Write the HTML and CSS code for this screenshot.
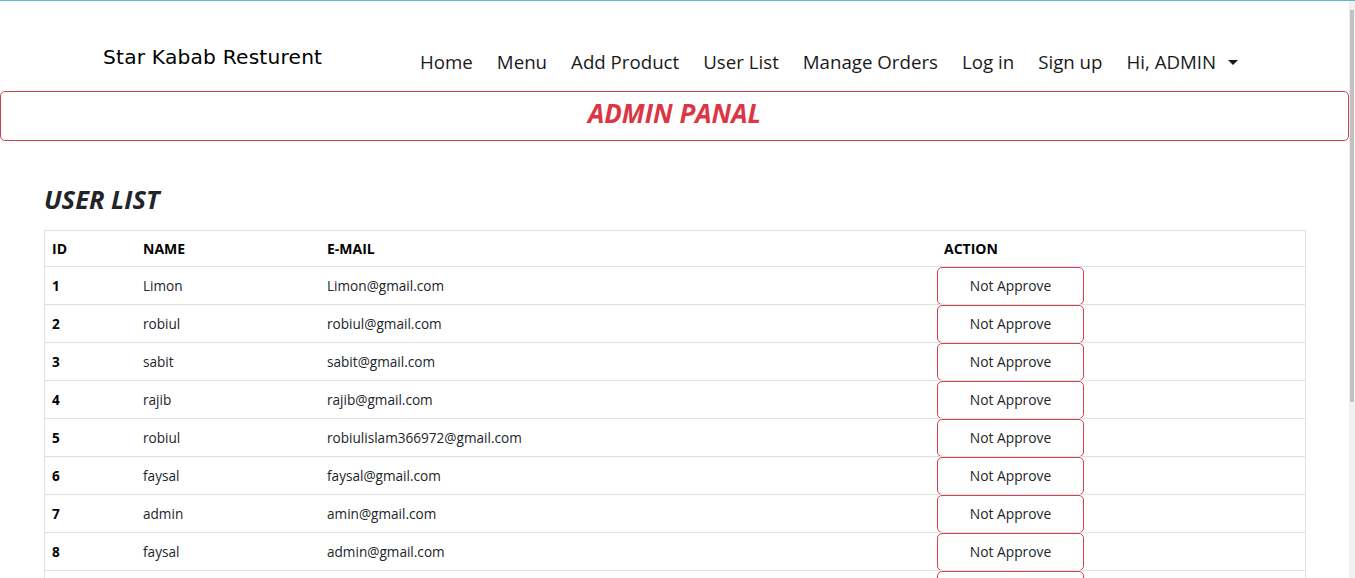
FILE: index.html
```html
<!DOCTYPE html>
<html lang="en">
<head>
<meta charset="utf-8">
<title>Admin - User List</title>
<link rel="stylesheet" href="styles.css">
</head>
<body>
<div class="topline"></div>
<div class="scrollbar"><div class="thumb"></div></div>
<div class="page">
  <header class="navbar">
    <a class="brand" href="#">Star Kabab Resturent</a>
    <ul class="nav">
      <li><a href="#">Home</a></li>
      <li><a href="#">Menu</a></li>
      <li><a href="#">Add Product</a></li>
      <li><a href="#">User List</a></li>
      <li><a href="#">Manage Orders</a></li>
      <li><a href="#">Log in</a></li>
      <li><a href="#">Sign up</a></li>
      <li><a href="#" class="dropdown">Hi, ADMIN<span class="caret"></span></a></li>
    </ul>
  </header>
  <div class="panel"><h2>ADMIN PANAL</h2></div>
  <main class="content">
    <h3 class="title">USER LIST</h3>
    <table class="users">
      <thead>
        <tr><th class="c-id">ID</th><th class="c-name">NAME</th><th class="c-mail">E-MAIL</th><th class="c-act">ACTION</th></tr>
      </thead>
      <tbody>
        <tr><td class="id">1</td><td>Limon</td><td>Limon@gmail.com</td><td class="act"><button class="btn">Not Approve</button></td></tr>
        <tr><td class="id">2</td><td>robiul</td><td>robiul@gmail.com</td><td class="act"><button class="btn">Not Approve</button></td></tr>
        <tr><td class="id">3</td><td>sabit</td><td>sabit@gmail.com</td><td class="act"><button class="btn">Not Approve</button></td></tr>
        <tr><td class="id">4</td><td>rajib</td><td>rajib@gmail.com</td><td class="act"><button class="btn">Not Approve</button></td></tr>
        <tr><td class="id">5</td><td>robiul</td><td>robiulislam366972@gmail.com</td><td class="act"><button class="btn">Not Approve</button></td></tr>
        <tr><td class="id">6</td><td>faysal</td><td>faysal@gmail.com</td><td class="act"><button class="btn">Not Approve</button></td></tr>
        <tr><td class="id">7</td><td>admin</td><td>amin@gmail.com</td><td class="act"><button class="btn">Not Approve</button></td></tr>
        <tr><td class="id">8</td><td>faysal</td><td>admin@gmail.com</td><td class="act"><button class="btn">Not Approve</button></td></tr>
        <tr class="last"><td class="id"></td><td></td><td></td><td class="act"><button class="btn" aria-label="Not Approve"></button></td></tr>
      </tbody>
    </table>
  </main>
</div>
</body>
</html>
```
FILE: styles.css
```css
html { overflow: hidden; }
body {
  margin: 0;
  background: #fff;
  color: #212529;
  font-family: "Open Sans", "Noto Sans", sans-serif;
}
.topline {
  position: fixed;
  top: 0; left: 0; right: 0;
  height: 1px;
  background: #62b7c4;
  z-index: 5;
}
.scrollbar {
  position: fixed;
  top: 1px; right: 0; bottom: 0;
  width: 6px;
  background: #f0f0f0;
  z-index: 4;
}
.scrollbar .thumb {
  margin-top: 9px;
  margin-left: 1px;
  width: 4px;
  height: 392px;
  background: #c1c1c1;
}
.page { width: 1349px; }

.navbar {
  display: flex;
  align-items: flex-start;
  height: 91px;
  padding-top: 1px;
  box-sizing: border-box;
}
.brand {
  width: 317px;
  margin-left: 103px;
  margin-top: 42px;
  font-family: "DejaVu Sans", sans-serif;
  font-size: 20.2px;
  letter-spacing: 0.2px;
  color: #000;
  text-decoration: none;
  line-height: 28px;
}
.nav {
  display: flex;
  gap: 24px;
  list-style: none;
  margin: 47px 0 0;
  padding: 0;
}
.nav a {
  font-size: 18.7px;
  color: #1a1a1a;
  text-decoration: none;
  line-height: 28px;
  white-space: nowrap;
  display: inline-flex;
  align-items: center;
}
.caret {
  display: inline-block;
  margin-left: 12px;
  width: 0; height: 0;
  border-top: 5px solid #1a1a1a;
  border-left: 5px solid transparent;
  border-right: 5px solid transparent;
}

.panel {
  height: 50px;
  box-sizing: border-box;
  border: 1px solid #c9404f;
  border-radius: 5px;
  display: flex;
  align-items: center;
  justify-content: center;
}
.panel h2 {
  margin: 0;
  color: #dc3545;
  font-size: 26px;
  font-weight: 700;
  font-style: italic;
  line-height: 1;
  padding-bottom: 6px;
}

.content {
  padding: 42px 43px 0 44px;
}
.title {
  margin: 0 0 15px;
  font-size: 25.5px;
  font-weight: 700;
  font-style: italic;
  line-height: 32px;
  color: #212529;
}
.users {
  width: 1262px;
  border-collapse: collapse;
  border: 1px solid #dee2e6;
  font-size: 13.6px;
}
.users th {
  text-align: left;
  font-weight: 700;
  color: #000;
  height: 34px;
  padding: 0 7px 1px;
  border-bottom: 1px solid #dee2e6;
  font-size: 14px;
}
.users td {
  height: 36px;
  padding: 0 7px 1px;
  border-bottom: 1px solid #dee2e6;
  color: #212529;
}
.users td.id { font-weight: 700; color: #000; }
.c-id { width: 77px; }
.c-name { width: 170px; }
.c-mail { width: 603px; }
.users td.act {
  height: 37px;
  padding: 0;
  vertical-align: top;
}
.btn {
  display: block;
  width: 147px;
  height: 38px;
  margin: 0 0 -1px 0;
  padding: 0 0 2px;
  background: #fff;
  border: 1px solid #d9404f;
  border-radius: 5px;
  font-family: "Open Sans", "Noto Sans", sans-serif;
  font-size: 13.8px;
  color: #212529;
  cursor: pointer;
}
```
